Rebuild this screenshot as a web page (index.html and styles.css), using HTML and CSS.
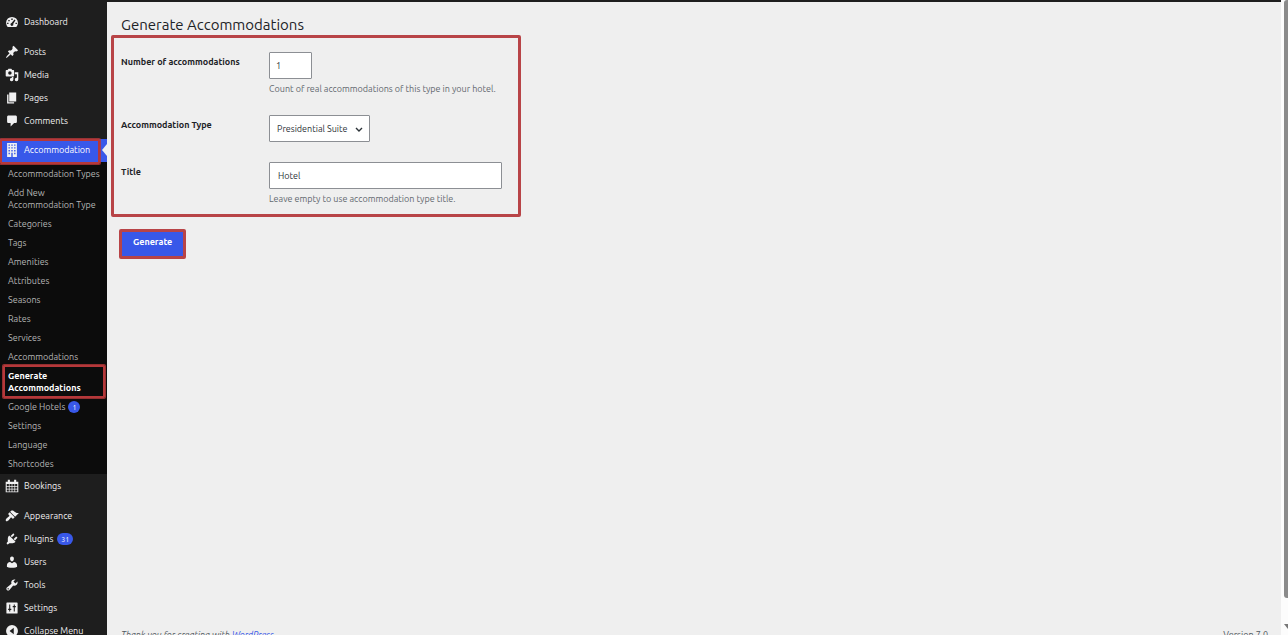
FILE: index.html
```
<!DOCTYPE html>
<html lang="en">
<head>
<meta charset="utf-8">
<title>Generate Accommodations</title>
<link rel="stylesheet" href="styles.css">
</head>
<body>
<div class="app">
  <nav class="sidebar" aria-label="Main menu">
    <ul class="menu">
      <li><a class="menu-link" href="#"><svg class="icon" viewBox="0 0 20 20"><path fill-rule="evenodd" d="M3.800 17h12.400A8.500 8.500 0 1 0 3.800 17zM9 5h2v2H9zM4.700 7h2v2h-2zM3 11h2v2H3zM15 11h2v2h-2zM13.500 6.500l1.500 1-3.300 5.300a2 2 0 1 1-2.300-1.200z"/></svg>Dashboard</a></li>
    </ul>
    <ul class="menu">
      <li><a class="menu-link" href="#"><svg class="icon" viewBox="0 0 20 20"><path d="M10.440 3.020l1.820-1.820 6.360 6.350-1.830 1.820c-1.050-.68-2.480-.57-3.410.36l-.75.75c-.92.93-1.040 2.350-.35 3.410l-1.830 1.820-2.410-2.410-2.800 2.790c-.42.42-3.380 2.710-3.800 2.290s1.860-3.390 2.280-3.810l2.790-2.790L4.100 9.360l1.830-1.820c1.050.69 2.480.57 3.400-.36l.75-.75c.93-.92 1.050-2.350.36-3.410z"/></svg>Posts</a></li>
      <li><a class="menu-link" href="#"><svg class="icon" viewBox="0 0 20 20"><path fill-rule="evenodd" d="M13 11V4c0-.55-.45-1-1-1h-1.670L9 1H5L3.670 3H2c-.55 0-1 .45-1 1v7c0 .55.45 1 1 1h10c.55 0 1-.45 1-1zM7 4.500a2.500 2.500 0 1 1 0 5 2.500 2.500 0 0 1 0-5zM14 6h5v10.500a2.500 2.500 0 1 1-2-2.450V9h-3zM10 14.050V13h2v3.500a2.500 2.500 0 1 1-2-2.450z"/></svg>Media</a></li>
      <li><a class="menu-link" href="#"><svg class="icon" viewBox="0 0 20 20"><path d="M6 15V2h10v13zM5 16h8v2H3V5h2z"/></svg>Pages</a></li>
      <li><a class="menu-link" href="#"><svg class="icon" viewBox="0 0 20 20"><path d="M5 2h10c1.100 0 2 .9 2 2v7c0 1.100-.9 2-2 2h-2l-5 5v-5H5c-1.100 0-2-.9-2-2V4c0-1.100.9-2 2-2z"/></svg>Comments</a></li>
    </ul>
    <ul class="menu menu-content">
      <li>
        <a class="menu-link current" href="#"><svg class="icon" viewBox="0 0 20 20"><path fill-rule="evenodd" d="M3 20V0h14v20zM5 2v2h2V2zM9 2v2h2V2zM13 2v2h2V2zM5 6v2h2V6zM9 6v2h2V6zM13 6v2h2V6zM5 10v2h2v-2zM9 10v2h2v-2zM13 10v2h2v-2zM5 14v2h2v-2zM13 14v2h2v-2zM9 14v6h2v-6z"/></svg>Accommodation</a>
        <ul class="submenu">
          <li><a href="#">Accommodation Types</a></li>
          <li><a href="#">Add New<br>Accommodation Type</a></li>
          <li><a href="#">Categories</a></li>
          <li><a href="#">Tags</a></li>
          <li><a href="#">Amenities</a></li>
          <li><a href="#">Attributes</a></li>
          <li><a href="#">Seasons</a></li>
          <li><a href="#">Rates</a></li>
          <li><a href="#">Services</a></li>
          <li><a href="#">Accommodations</a></li>
          <li><a class="selected" href="#" aria-current="page">Generate<br>Accommodations</a></li>
          <li><a href="#">Google Hotels<span class="badge">1</span></a></li>
          <li><a href="#">Settings</a></li>
          <li><a href="#">Language</a></li>
          <li><a href="#">Shortcodes</a></li>
        </ul>
      </li>
      <li><a class="menu-link" href="#"><svg class="icon" viewBox="0 0 20 20"><path fill-rule="evenodd" d="M1 4h3V1h3v3h6V1h3v3h3v15H1zM2.500 7v3h3V7zM6.500 7v3h3V7zM10.500 7v3h3V7zM14.500 7v3h3V7zM2.500 11v3h3v-3zM6.500 11v3h3v-3zM10.500 11v3h3v-3zM14.500 11v3h3v-3zM2.500 15v3h3v-3zM6.500 15v3h3v-3zM10.500 15v3h3v-3zM14.500 15v3h3v-3z"/></svg>Bookings</a></li>
    </ul>
    <ul class="menu">
      <li><a class="menu-link" href="#"><svg class="icon" viewBox="0 0 20 20"><path d="M14.480 11.060L7.410 3.990l1.500-1.500c.5-.56 2.300-.47 3.510.32 1.210.8 1.430 1.280 2.910 2.100 1.180.64 2.450 1.260 4.450.85zM13.770 11.770L6.700 4.700 4.930 6.470c-.39.39-.39 1.020 0 1.410l1.060 1.060c.39.39.39 1.030 0 1.420-.6.6-1.430 1.110-2.210 1.690-.35.26-.7.53-1.010.84C1.430 14.230.4 16.080 1.400 17.070c.99 1 2.840-.03 4.180-1.360.31-.31.58-.66.85-1.020.57-.78 1.080-1.610 1.690-2.210.39-.39 1.020-.39 1.410 0l1.060 1.060c.39.39 1.020.39 1.410 0z"/></svg>Appearance</a></li>
      <li><a class="menu-link" href="#"><svg class="icon" viewBox="0 0 20 20"><path d="M13.110 4.360L9.870 7.600 8 5.730l3.240-3.240c.35-.34 1.050-.2 1.560.32.52.51.66 1.210.31 1.550zM5.110 6.130l.91-1.120 9.010 9.010-1.190.84c-.71.71-2.630 1.160-3.820 1.160H6.140L4.900 17.260c-.59.59-1.540.59-2.120 0-.59-.58-.59-1.530 0-2.120l1.240-1.240v-3.880c0-1.130.4-3.190 1.090-3.890zM12.370 10.100l3.240-3.240c.34-.35 1.040-.21 1.550.31.52.51.66 1.210.31 1.550l-3.240 3.250z"/></svg>Plugins<span class="badge badge-wide">31</span></a></li>
      <li><a class="menu-link" href="#"><svg class="icon" viewBox="0 0 20 20"><path d="M10 9.250c-2.270 0-2.730-3.440-2.730-3.440C7 4.020 7.820 2 9.970 2c2.160 0 2.980 2.020 2.710 3.810 0 0-.41 3.440-2.680 3.440zM10 11.820L12.720 10c2.390 0 4.520 2.330 4.520 4.530v2.490s-3.650 1.130-7.240 1.130c-3.650 0-7.240-1.130-7.240-1.130v-2.490c0-2.250 1.940-4.480 4.470-4.480z"/></svg>Users</a></li>
      <li><a class="menu-link" href="#"><svg class="icon" viewBox="0 0 20 20"><path fill-rule="evenodd" d="M16.680 9.770c-1.340 1.340-3.300 1.670-4.950.99l-5.410 6.520c-.99.99-2.590.99-3.580 0s-.99-2.590 0-3.570l6.520-5.420c-.68-1.650-.35-3.610.99-4.950 1.280-1.280 3.120-1.620 4.720-1.060l-2.890 2.890 2.820 2.820 2.860-2.870c.53 1.580.18 3.390-1.080 4.650zM3.810 16.210c.4.39 1.040.39 1.430 0 .4-.4.4-1.040 0-1.430-.39-.4-1.030-.4-1.430 0-.39.39-.39 1.030 0 1.430z"/></svg>Tools</a></li>
      <li><a class="menu-link" href="#"><svg class="icon" viewBox="0 0 20 20"><path fill-rule="evenodd" d="M3 2h14a1 1 0 0 1 1 1v14a1 1 0 0 1-1 1H3a1 1 0 0 1-1-1V3a1 1 0 0 1 1-1zM6 5v6H4.500v2H6v2h1.500v-2H9v-2H7.500V5zM12.500 5v2H11v2h1.500v6H14V9h1.500V7H14V5z"/></svg>Settings</a></li>
      <li><button class="menu-link" type="button"><svg class="icon" viewBox="0 0 20 20"><path fill-rule="evenodd" d="M10 1.500a8.500 8.500 0 1 1 0 17 8.500 8.500 0 0 1 0-17zM12.500 5.500L6.500 10l6 4.500z"/></svg>Collapse Menu</button></li>
    </ul>
  </nav>
  <div class="content">
    <main class="page">
      <h1 class="page-title">Generate Accommodations</h1>
      <form class="form">
        <div class="fields">
          <div class="row">
            <label class="label" for="count">Number of accommodations</label>
            <div class="field">
              <input class="control control-small" id="count" type="text" inputmode="numeric" value="1">
              <p class="hint">Count of real accommodations of this type in your hotel.</p>
            </div>
          </div>
          <div class="row">
            <label class="label" for="type">Accommodation Type</label>
            <div class="field select-wrap">
              <select class="control control-select" id="type"><option>Presidential Suite</option></select>
              <svg class="chevron" viewBox="0 0 8 6"><path d="M1 1l3 3 3-3"/></svg>
            </div>
          </div>
          <div class="row">
            <label class="label" for="title">Title</label>
            <div class="field">
              <input class="control" id="title" type="text" value="Hotel">
              <p class="hint">Leave empty to use accommodation type title.</p>
            </div>
          </div>
        </div>
        <button class="submit" type="button">Generate</button>
      </form>
    </main>
    <footer class="footer">
      <p class="thanks">Thank you for creating with <a href="#">WordPress</a>.</p>
      <p>Version 7.0</p>
    </footer>
  </div>
  <div class="scrollbar" aria-hidden="true">
    <div class="thumb"></div>
    <div class="arrow"></div>
  </div>
</div>
</body>
</html>
```
FILE: styles.css
```
* { box-sizing: border-box; }

body {
  margin: 0;
  height: 100vh;
  overflow: hidden;
  background: #efefef;
  color: #1d2327;
  font-family: Ubuntu, "Noto Sans", sans-serif;
  font-size: 9px;
  line-height: 12px;
}

ul, p, h1 { margin: 0; padding: 0; }
ul { list-style: none; }

.app {
  display: flex;
  height: 100vh;
  border-top: 2px solid #1e1e1e;
}

/* Sidebar */
.sidebar {
  flex: 0 0 107px;
  display: flex;
  flex-direction: column;
  gap: 7px;
  padding-top: 8px;
  background: #1e1e1e;
}

.menu-link {
  position: relative;
  display: flex;
  align-items: center;
  width: 100%;
  height: 23px;
  padding: 0 0 0 5px;
  border: 0;
  background: none;
  color: #f0f0f1;
  font: inherit;
  text-decoration: none;
  white-space: nowrap;
}

.icon {
  width: 14px;
  height: 14px;
  margin-right: 5px;
  fill: #f0f0f1;
}

.current { padding-bottom: 1px; background: #3858e9; color: #fff; }

.current::after {
  content: "";
  position: absolute;
  right: 0;
  top: 5px;
  border: 6px solid transparent;
  border-right: 5px solid #efefef;
  border-left: 0;
}

.current::before,
.selected::before {
  content: "";
  position: absolute;
  border: 2px solid #b5383a;
  border-radius: 1px;
  box-shadow: 0 0 0 1px #b5383acc;
}

.current::before { inset: 0 7px -2px 0; }
.selected::before { inset: -1px 2px -1px 3px; }

.submenu { padding: 2px 0 1px; background: #0c0c0c; }

.submenu a {
  position: relative;
  display: block;
  padding: 4px 0 3px 8px;
  color: #b5b5b5;
  text-decoration: none;
  white-space: nowrap;
}

.submenu .selected { color: #fff; font-weight: 700; }

.badge {
  display: inline-block;
  min-width: 12px;
  margin-left: 3px;
  padding: 0 3px;
  border-radius: 6px;
  background: #3858e9;
  color: #fff;
  font-size: 7px;
  text-align: center;
}

.badge-wide { margin-left: 4px; padding: 0 4px; }

/* Page */
.content {
  flex: 1;
  display: flex;
  flex-direction: column;
  height: calc(100vh + 12px);
}

.page { flex: 1; padding: 12px 4px 0; }

.page-title {
  padding-left: 10px;
  font-size: 15px;
  font-weight: 400;
  line-height: 21px;
}

.form {
  display: flex;
  flex-direction: column;
  align-items: flex-start;
  gap: 12px;
}

.fields {
  display: flex;
  flex-direction: column;
  gap: 20px;
  width: 410px;
  max-width: 100%;
  padding: 14px 16px 9px 7px;
  border: 3px solid #b84447;
  border-radius: 2px;
}

.row { display: grid; grid-template-columns: 148px 1fr; }

.label { padding-top: 4px; font-weight: 700; }

.control {
  display: block;
  width: 100%;
  height: 27px;
  padding: 0 8px;
  border: 1px solid #8c8f94;
  border-radius: 1px;
  background: #fff;
  color: #2c3338;
  font: inherit;
}

.control-small { width: 43px; padding: 0 6px; }

.select-wrap { position: relative; width: 101px; }
.control-select { padding: 0 7px; appearance: none; }

.chevron {
  position: absolute;
  top: 12px;
  right: 7px;
  width: 8px;
  height: 6px;
  fill: none;
  stroke: #2c3338;
  stroke-width: 1.4;
  pointer-events: none;
}

.hint { margin-top: 4px; color: #646970; white-space: nowrap; }

.submit {
  margin-left: 8px;
  padding: 4px 11px 8px;
  border: 3px solid #b84447;
  border-radius: 2px;
  background: #3858e9;
  color: #fff;
  font: inherit;
  font-weight: 700;
}

.footer {
  display: flex;
  justify-content: space-between;
  padding: 0 13px 8px 14px;
  color: #50575e;
}

.thanks { font-style: italic; }
.footer a { color: #3858e9; }

/* Window scrollbar */
.scrollbar {
  flex: 0 0 7px;
  display: flex;
  flex-direction: column;
  justify-content: space-between;
  margin-top: -2px;
  padding: 0 0 6px 3px;
  background: #fcfcfc;
}

.thumb { height: 95%; border-radius: 3px 0 0 3px; background: #8b8b8b; }
.arrow { border-top: 5px solid #777; border-left: 4px solid transparent; }
```
